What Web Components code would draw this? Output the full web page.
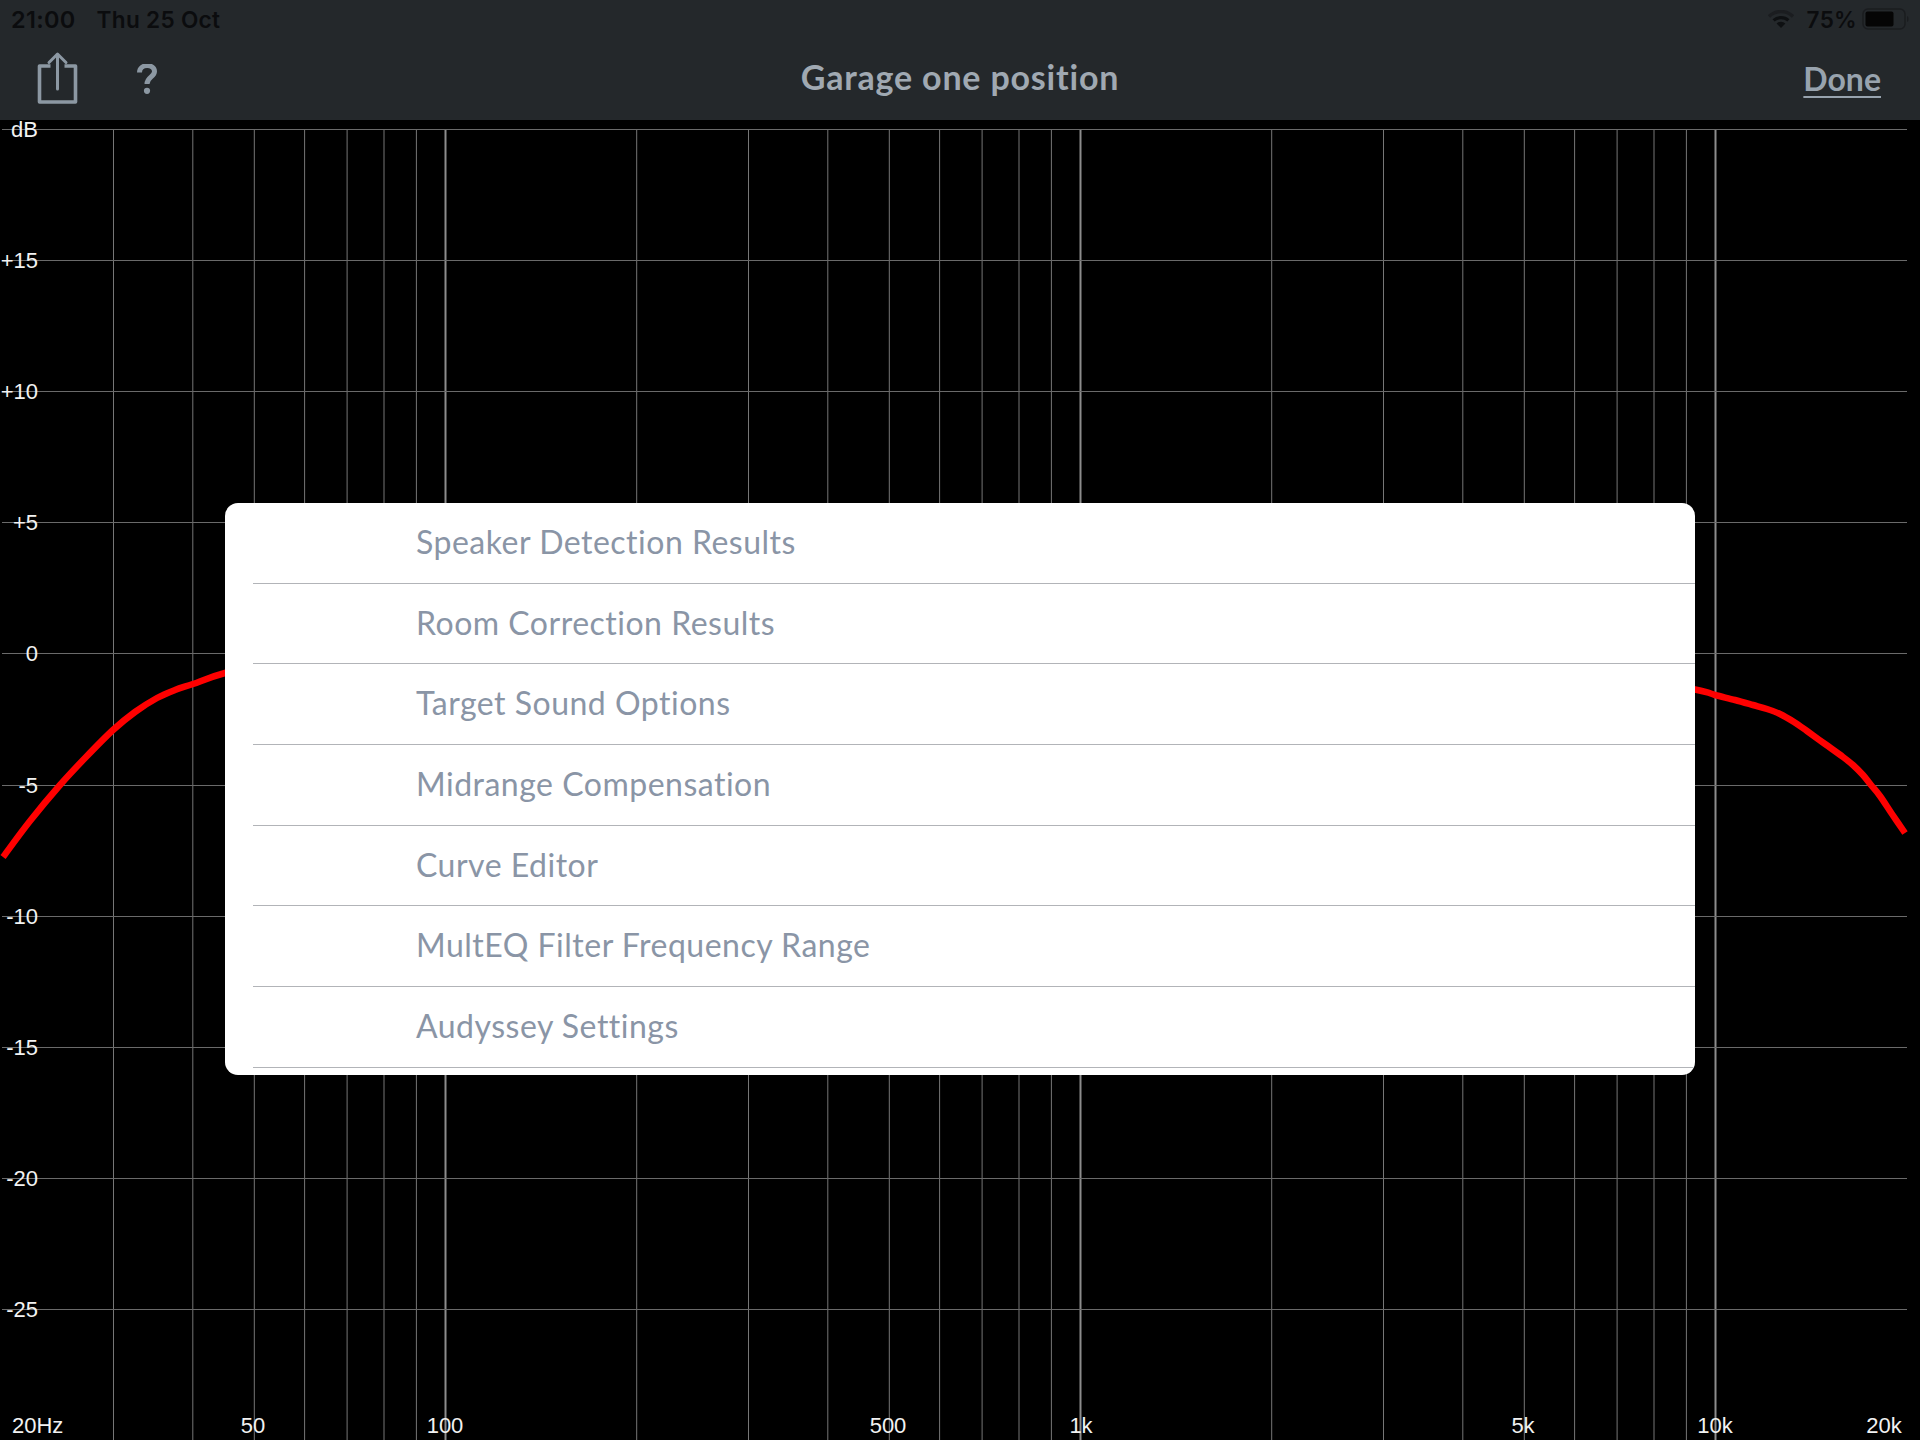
<!doctype html>
<html>
<head>
<meta charset="utf-8">
<title>Garage one position</title>
<style>
    html, body { margin: 0; padding: 0; background: #000; }
</style>
</head>
<body>
<eq-screen>
    <status-bar slot="top"></status-bar>
    <nav-bar slot="top" title-text="Garage one position"></nav-bar>
    <response-chart slot="main"></response-chart>
    <menu-sheet slot="overlay">
        <menu-row>Speaker Detection Results</menu-row>
        <menu-row>Room Correction Results</menu-row>
        <menu-row>Target Sound Options</menu-row>
        <menu-row>Midrange Compensation</menu-row>
        <menu-row>Curve Editor</menu-row>
        <menu-row>MultEQ Filter Frequency Range</menu-row>
        <menu-row>Audyssey Settings</menu-row>
    </menu-sheet>
</eq-screen>
<script>
    class EqScreen extends HTMLElement {
        constructor() {
            super();
            this.attachShadow({mode: 'open'}).innerHTML = `
                <style>
                    :host { display: flex; flex-direction: column; position: relative; width: 1920px; height: 1440px; overflow: hidden; background: #000; }
                    .top { display: block; flex: none; background: #24282b; }
                    .main { display: block; flex: 1; min-height: 0; }
                    /* the sheet floats over the chart */
                    .overlay { position: absolute; left: 225px; top: 503px; }
                </style>
                <div class="top"><slot name="top"></slot></div>
                <div class="main"><slot name="main"></slot></div>
                <div class="overlay"><slot name="overlay"></slot></div>`;
        }
    }

    class StatusBar extends HTMLElement {
        constructor() {
            super();
            this.attachShadow({mode: 'open'}).innerHTML = `
                <style>
                    :host { display: flex; align-items: center; height: 38px; padding: 0 8px 0 11px; box-sizing: border-box; color: #0b0c0e; font: 600 23.5px Inter, "Liberation Sans", sans-serif; letter-spacing: 0.3px; }
                    .date { margin-left: 21px; font-size: 22.6px; }
                    .right { margin-left: auto; display: flex; align-items: center; }
                    .pct { margin: 0 5px 0 13px; font-size: 22.5px; }
                    svg { display: block; }
                </style>
                <span>21:00</span><span class="date">Thu 25 Oct</span>
                <div class="right">
                    <svg width="26" height="18" viewBox="0 0 26 18">
                        <path d="M1 6.5 A17 17 0 0 1 25 6.5" fill="none" stroke="#1b1d20" stroke-width="3.4"/>
                        <path d="M5.6 10.4 A11 11 0 0 1 20.4 10.4" fill="none" stroke="#0e1012" stroke-width="3.2"/>
                        <path d="M13 18 L8.6 13.4 A6.4 6.4 0 0 1 17.4 13.4 Z" fill="#0e1012"/>
                    </svg>
                    <span class="pct">75%</span>
                    <svg width="50" height="22" viewBox="0 0 50 22">
                        <rect x="1" y="1" width="42" height="20" rx="5" fill="none" stroke="#1a1c1f" stroke-width="1.5"/>
                        <rect x="3.5" y="3.5" width="28" height="15" rx="2" fill="#050505"/>
                        <path d="M45 8 C47 8.5 47 13.5 45 14 Z" fill="#1a1c1f"/>
                    </svg>
                </div>`;
        }
    }

    class NavBar extends HTMLElement {
        constructor() {
            super();
            this.attachShadow({mode: 'open'}).innerHTML = `
                <style>
                    :host { display: grid; grid-template-columns: 1fr auto 1fr; align-items: center; height: 82px; padding: 0 38px; box-sizing: border-box; color: #a0a9b2; font: 700 34px Lato, "Liberation Sans", sans-serif; }
                    .left { display: flex; align-items: center; gap: 59px; margin-left: -1px; }
                    .title { letter-spacing: 0.8px; margin-top: -6px; }
                    .done { justify-self: end; color: #98a3ae; font-size: 32px; margin: -2px 1px 0 0; text-decoration: underline; text-decoration-thickness: 2px; text-underline-offset: 5px; }
                    svg { display: block; }
                </style>
                <div class="left">
                    <svg width="41" height="56" viewBox="0 0 41 56">
                        <path d="M13.5 15 H2.5 V51 H38.5 V15 H27.5" fill="none" stroke="#8c98a3" stroke-width="3.6" stroke-linejoin="round"/>
                        <path d="M20.5 38 V4 M12 11.5 L20.5 3 L29 11.5" fill="none" stroke="#8c98a3" stroke-width="3" stroke-linecap="round" stroke-linejoin="round"/>
                    </svg>
                    <svg width="20" height="30" viewBox="0 0 20 30">
                        <path d="M2.5 8.5 C2.5 -0.5 17.5 -0.5 17.5 7.5 C17.5 13 10 13 10 20" fill="none" stroke="#8c98a3" stroke-width="5"/>
                        <circle cx="10" cy="26.8" r="3.1" fill="#8c98a3"/>
                    </svg>
                </div>
                <div class="title"></div>
                <div class="done">Done</div>`;
        }
        connectedCallback() {
            this.shadowRoot.querySelector('.title').textContent = this.getAttribute('title-text');
        }
    }

    const NS = 'http://www.w3.org/2000/svg';
    const LEFT = 2, RIGHT = 1907, DECADE = 635;

    // points read off the red trace; the middle part is hidden by the sheet
    const CURVE = [[3, 857], [30, 821], [60, 785], [86, 757], [113, 730], [135, 712], [157, 698], [175, 690], [193, 684], [225, 673],
        [300, 655], [600, 640], [1300, 640], [1600, 672], [1695, 689.5], [1715, 695], [1735, 700], [1753, 705], [1767, 709], [1780, 714], [1794, 722], [1807, 731],
        [1825, 744], [1843, 757], [1853, 765], [1863, 775], [1871, 785], [1880, 796], [1892, 814], [1905, 833]];

    // catmull-rom through the points so the trace has no corners
    function smoothPath(pts) {
        let d = 'M' + pts[0].join(' ');
        for (let i = 0; i < pts.length - 1; i++) {
            const p0 = pts[i - 1] || pts[i], p1 = pts[i], p2 = pts[i + 1], p3 = pts[i + 2] || p2;
            d += ' C' + [p1[0] + (p2[0] - p0[0]) / 6, p1[1] + (p2[1] - p0[1]) / 6,
                p2[0] - (p3[0] - p1[0]) / 6, p2[1] - (p3[1] - p1[1]) / 6, p2[0], p2[1]].join(' ');
        }
        return d;
    }

    function xForHz(hz) {
        return 445.5 + (Math.log10(hz) - 2) * DECADE;
    }

    class ResponseChart extends HTMLElement {
        constructor() {
            super();
            this.attachShadow({mode: 'open'}).innerHTML = `
                <style>
                    :host { display: block; height: 100%; }
                    svg { display: block; overflow: visible; }
                    text { fill: #f2f2f2; font: 22px "Liberation Sans", Arial, sans-serif; }
                    .h { stroke: #6a6a6a; stroke-width: 1; }
                    .v { stroke: #767676; stroke-width: 1; }
                    .v.major { stroke: #8c8c8c; stroke-width: 2; }
                    .curve { fill: none; stroke: #f00; stroke-width: 6.5; stroke-linejoin: round; }
                </style>
                <svg width="1920" height="1320" viewBox="0 120 1920 1320"></svg>`;
        }
        add(name, attrs, text) {
            const el = document.createElementNS(NS, name);
            for (const k in attrs) el.setAttribute(k, attrs[k]);
            if (text) el.textContent = text;
            this.shadowRoot.querySelector('svg').appendChild(el);
        }
        connectedCallback() {
            const freqs = [30, 40, 50, 60, 70, 80, 90, 100, 200, 300, 400, 500, 600, 700, 800, 900, 1000,
                2000, 3000, 4000, 5000, 6000, 7000, 8000, 9000, 10000];
            freqs.forEach(hz => {
                const x = xForHz(hz).toFixed(1);
                const major = hz === 100 || hz === 1000 || hz === 10000;
                this.add('line', {class: major ? 'v major' : 'v', x1: x, x2: x, y1: 130, y2: 1440});
            });

            const dbLabels = ['dB', '+15', '+10', '+5', '0', '-5', '-10', '-15', '-20', '-25'];
            dbLabels.forEach((label, i) => {
                const y = Math.round(129 + i * 131.1) + .5;
                this.add('line', {class: 'h', x1: LEFT, x2: RIGHT, y1: y, y2: y});
                this.add('text', {x: 38, y: y + 7, 'text-anchor': 'end'}, label);
            });

            [['20Hz', 12, 'start'], ['50', 253, 'middle'], ['100', 445, 'middle'], ['500', 888, 'middle'],
             ['1k', 1081, 'middle'], ['5k', 1523, 'middle'], ['10k', 1715, 'middle'], ['20k', 1884, 'middle']]
                .forEach(([label, x, anchor]) => this.add('text', {x, y: 1433, 'text-anchor': anchor}, label));

            this.add('path', {class: 'curve', d: smoothPath(CURVE)});
        }
    }

    class MenuSheet extends HTMLElement {
        constructor() {
            super();
            this.attachShadow({mode: 'open'}).innerHTML = `
                <style>
                    :host { display: flex; flex-direction: column; width: 1470px; height: 572px; padding-left: 28px; box-sizing: border-box; background: #fff; border-radius: 13px; overflow: hidden; }
                </style>
                <slot></slot>`;
        }
    }

    class MenuRow extends HTMLElement {
        constructor() {
            super();
            this.attachShadow({mode: 'open'}).innerHTML = `
                <style>
                    :host { display: flex; align-items: center; flex: none; height: 80.7px; padding: 0 0 3px 163px; box-sizing: border-box; border-bottom: 1.5px solid #b2b4b8; color: #8a95a6; font: 400 32px Lato, "Open Sans", sans-serif; letter-spacing: 0.5px; }
                </style>
                <slot></slot>`;
        }
    }

    customElements.define('eq-screen', EqScreen);
    customElements.define('status-bar', StatusBar);
    customElements.define('nav-bar', NavBar);
    customElements.define('response-chart', ResponseChart);
    customElements.define('menu-sheet', MenuSheet);
    customElements.define('menu-row', MenuRow);
</script>
</body>
</html>
